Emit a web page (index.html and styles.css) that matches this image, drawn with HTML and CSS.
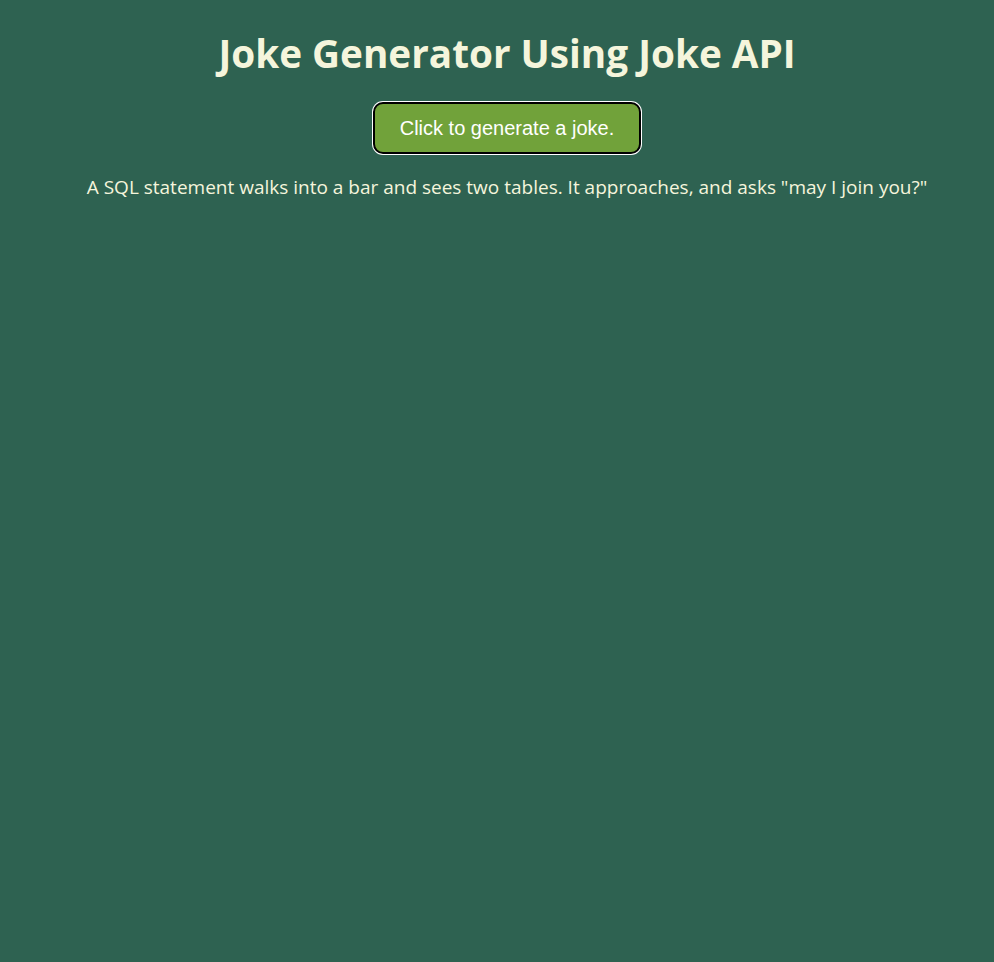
FILE: index.html
```html
<!DOCTYPE html>
<html>
<head>
<meta charset="utf-8">
<link rel="stylesheet" href="styles.css">
<title>Joke Generator</title>
</head>
<body>
<div class="container">
  <h1 class="title">Joke Generator Using Joke API</h1>
  <button class="btn">Click to generate a joke.</button>
  <p class="joke">A SQL statement walks into a bar and sees two tables. It approaches, and asks "may I join you?"</p>
</div>
</body>
</html>
```
FILE: styles.css
```css
html, body {
  margin: 0;
  padding: 0;
  background: #2e6251;
  height: 100%;
}
.container {
  display: flex;
  flex-direction: column;
  align-items: center;
  font-family: "Open Sans", sans-serif;
  color: #f5f5dc;
  padding-top: 26px;
  padding-left: 20px;
}
.title {
  margin: 0;
  font-size: 38.7px;
  font-weight: 700;
  line-height: 54px;
}
.btn {
  margin-top: 22px;
  width: 268px;
  height: 52px;
  background: #71a23a;
  color: #ffffff;
  font-family: "Liberation Sans", Arial, sans-serif;
  font-size: 20px;
  border: 2px solid #000;
  border-radius: 10px;
  box-shadow: 0 0 0 1px #fff;
  cursor: pointer;
}
.joke {
  margin: 21px 0 0;
  font-size: 19px;
  line-height: 25px;
}
```
